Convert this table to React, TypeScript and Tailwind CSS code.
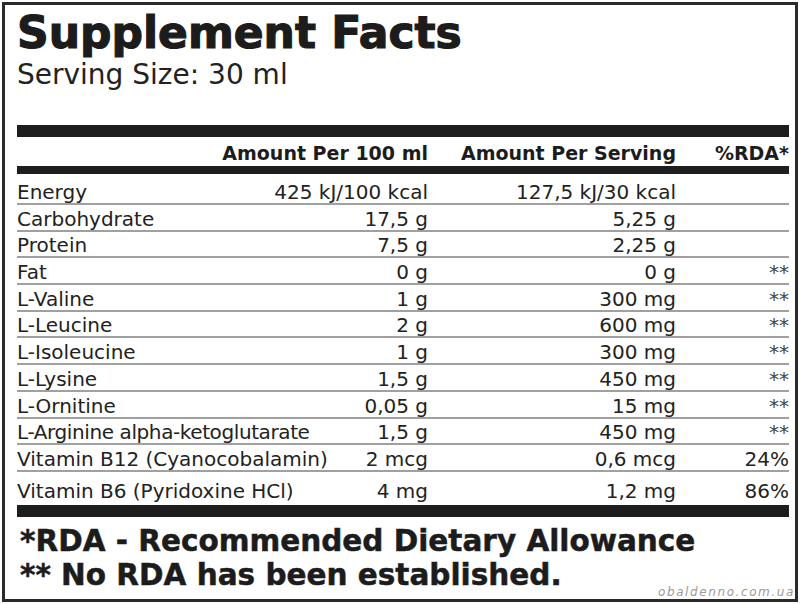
import React from "react";

type Row = { name: string; per100: string; serving: string; rda: string; tight?: boolean };

const rows: Row[] = [
  { name: "Energy", per100: "425 kJ/100 kcal", serving: "127,5 kJ/30 kcal", rda: "" },
  { name: "Carbohydrate", per100: "17,5 g", serving: "5,25 g", rda: "" },
  { name: "Protein", per100: "7,5 g", serving: "2,25 g", rda: "" },
  { name: "Fat", per100: "0 g", serving: "0 g", rda: "**" },
  { name: "L-Valine", per100: "1 g", serving: "300 mg", rda: "**" },
  { name: "L-Leucine", per100: "2 g", serving: "600 mg", rda: "**" },
  { name: "L-Isoleucine", per100: "1 g", serving: "300 mg", rda: "**" },
  { name: "L-Lysine", per100: "1,5 g", serving: "450 mg", rda: "**" },
  { name: "L-Ornitine", per100: "0,05 g", serving: "15 mg", rda: "**" },
  { name: "L-Arginine alpha-ketoglutarate", per100: "1,5 g", serving: "450 mg", rda: "**", tight: true },
  { name: "Vitamin B12 (Cyanocobalamin)", per100: "2 mcg", serving: "0,6 mcg", rda: "24%" },
];

function Cells({ r }: { r: Row }) {
  return (
    <>
      <div className={"whitespace-nowrap " + (r.tight ? "tracking-[-0.4px]" : "")}>{r.name}</div>
      <div className="whitespace-nowrap text-right">{r.per100}</div>
      <div className="whitespace-nowrap text-right">{r.serving}</div>
      <div className={"whitespace-nowrap text-right " + (r.rda === "**" ? "text-[#444]" : "")}>{r.rda}</div>
    </>
  );
}

export default function App() {
  return (
    <div className="w-[800px] h-[604px] bg-white p-[2px] font-['DejaVu_Sans',sans-serif] text-[#222]">
      <div className="relative h-full border-[3px] border-[#2b2b2b] pl-[12px] pr-[6px] pt-[6px]">
        <h1 className="text-[44px] leading-[44px] font-bold text-[#1c1c1c] whitespace-nowrap [-webkit-text-stroke:1.2px_#1c1c1c]">
          Supplement Facts
        </h1>
        <div className="mt-[6px] text-[28px] leading-[28px] whitespace-nowrap">Serving Size: 30 ml</div>

        <div className="mt-[36px] h-[12px] bg-[#1e1e1e]" />

        <div className="grid h-[29px] grid-cols-[160px_251px_248px_113px] items-end pb-[2px] text-[19px] leading-[22px] font-bold text-[#1c1c1c]">
          <div />
          <div className="whitespace-nowrap text-right">Amount Per 100 ml</div>
          <div className="whitespace-nowrap text-right">Amount Per Serving</div>
          <div className="whitespace-nowrap text-right">%RDA*</div>
        </div>

        <div className="h-[8px] bg-[#1e1e1e]" />

        {rows.map((r, i) => (
          <div
            key={r.name}
            className={
              "grid grid-cols-[160px_251px_248px_113px] items-end border-b-2 border-[#a0a0a0] pb-[1px] text-[20px] leading-[20px] " +
              (i === 0 ? "h-[31px]" : "h-[26.7px]")
            }
          >
            <Cells r={r} />
          </div>
        ))}

        <div className="grid h-[33px] grid-cols-[160px_251px_248px_113px] items-end pb-[4px] text-[20px] leading-[20px]">
          <Cells r={{ name: "Vitamin B6 (Pyridoxine HCl)", per100: "4 mg", serving: "1,2 mg", rda: "86%" }} />
        </div>

        <div className="h-[12px] bg-[#1e1e1e]" />

        <div className="mt-[7px] pl-[3px] text-[29.5px] leading-[34px] font-bold text-[#1c1c1c] whitespace-nowrap [-webkit-text-stroke:0.5px_#1c1c1c]">
          <div>*RDA - Recommended Dietary Allowance</div>
          <div>** No RDA has been established.</div>
        </div>

        <div className="absolute right-[0px] bottom-[1px] text-[12px] leading-[12px] italic tracking-[1.6px] text-[#9a9a9a] whitespace-nowrap">
          obaldenno.com.ua
        </div>
      </div>
    </div>
  );
}
